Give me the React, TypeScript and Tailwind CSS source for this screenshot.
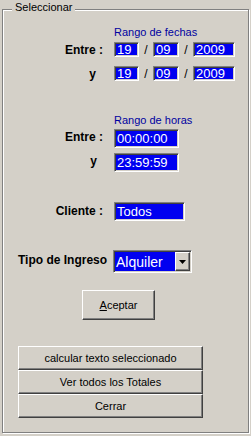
import React from "react";

const sunken =
  "border border-t-[#808080] border-l-[#808080] border-r-white border-b-white shadow-[inset_1px_1px_0_#404040,inset_-1px_-1px_0_#d4d0c8]";
const raised =
  "border border-t-white border-l-white border-r-[#404040] border-b-[#404040] shadow-[inset_-1px_-1px_0_#808080]";
const narrow = "font-['Liberation_Sans_Narrow','Arial_Narrow','Liberation_Sans',sans-serif]";

const Field = ({ value, w, h }: { value: string; w: string; h: string }) => (
  <div className={`${sunken} ${w} ${h} bg-[#0000f0] text-white text-[13px] ${narrow} flex items-center pl-[2px] leading-none`}>
    {value}
  </div>
);

const Label = ({ text, className = "" }: { text: string; className?: string }) => (
  <div className={`text-right font-bold text-[12px] leading-[14px] text-black ${className}`}>{text}</div>
);

const DateRow = ({ label, labelClass }: { label: string; labelClass?: string }) => (
  <>
    <Label text={label} className={labelClass} />
    <div className="flex items-center">
      <Field value="19" w="w-[25px]" h="h-[15px]" />
      <span className="w-[14px] text-center text-[12px] leading-none">/</span>
      <Field value="09" w="w-[26px]" h="h-[15px]" />
      <span className="w-[14px] text-center text-[12px] leading-none">/</span>
      <Field value="2009" w="w-[42px]" h="h-[15px]" />
    </div>
  </>
);

export default function App() {
  return (
    <div className="w-[251px] h-[436px] bg-[#d4d0c8] overflow-hidden font-['Liberation_Sans',Arial,sans-serif] text-black">
      <div className="pt-[9px] px-[2px]">
        <div className="relative h-[424px] border border-[#808080] shadow-[inset_1px_1px_0_#fff,1px_1px_0_#fff]">
          <span className="absolute left-[9px] -top-[9px] bg-[#d4d0c8] px-[3px] text-[11px] leading-[13px]">
            Seleccionar
          </span>

          {/* fechas */}
          <div className="grid grid-cols-[100px_1fr] gap-x-[11px] items-center pt-[16px]">
            <div />
            <div className="text-[11px] leading-[13px] text-[#0000a0]">Rango de fechas</div>
          </div>
          <div className="grid grid-cols-[100px_1fr] gap-x-[11px] gap-y-[9px] items-center mt-[3px]">
            <DateRow label="Entre :" />
            <DateRow label="y" labelClass="pr-[7px]" />
          </div>

          {/* horas */}
          <div className="grid grid-cols-[100px_1fr] gap-x-[11px] items-center mt-[33px]">
            <div />
            <div className="text-[11px] leading-[13px] text-[#0000a0]">Rango de horas</div>
          </div>
          <div className="grid grid-cols-[100px_1fr] gap-x-[11px] gap-y-[5px] items-center mt-[2px]">
            <Label text="Entre :" className="pb-[3px]" />
            <Field value="00:00:00" w="w-[65px]" h="h-[19px]" />
            <Label text="y" className="pr-[6px] pb-[3px]" />
            <Field value="23:59:59" w="w-[65px]" h="h-[19px]" />
          </div>

          {/* cliente */}
          <div className="grid grid-cols-[100px_1fr] gap-x-[11px] items-center mt-[30px]">
            <Label text="Cliente :" className="pb-[2px]" />
            <Field value="Todos" w="w-[71px]" h="h-[19px]" />
          </div>

          {/* tipo de ingreso */}
          <div className="flex items-center mt-[29px] pl-[15px] gap-[5px]">
            <div className="font-bold text-[12px] leading-[14px] w-[90px] whitespace-nowrap pb-[3px]">Tipo de Ingreso</div>
            <div className={`${sunken} w-[79px] h-[23px] bg-[#0000f0] flex items-center`}>
              <span className="flex-1 text-white text-[14px] leading-none pl-[2px]">Alquiler</span>
              <div className={`${raised} bg-[#d4d0c8] w-[15px] h-[19px] mr-[1px] flex items-center justify-center`}>
                <svg width="7" height="4" viewBox="0 0 7 4">
                  <path d="M0 0h7L3.5 4z" fill="#000" />
                </svg>
              </div>
            </div>
          </div>

          {/* aceptar */}
          <div className="mt-[17px] pl-[79px]">
            <button className={`${raised} w-[73px] h-[30px] bg-[#d4d0c8] text-[11px] leading-none`}>
              <span className="underline">A</span>ceptar
            </button>
          </div>

          {/* botones */}
          <div className="mt-[26px] ml-[15px] w-[185px] flex flex-col">
            {["calcular texto seleccionado", "Ver todos los Totales", "Cerrar"].map((t) => (
              <button key={t} className={`${raised} h-[24px] bg-[#d4d0c8] text-[11px] leading-none`}>
                {t}
              </button>
            ))}
          </div>
        </div>
      </div>
    </div>
  );
}
